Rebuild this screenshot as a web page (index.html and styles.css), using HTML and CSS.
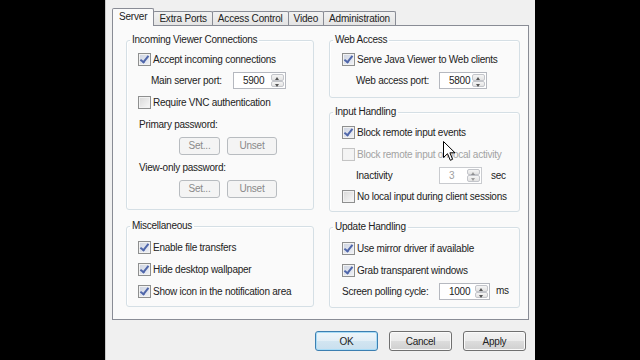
FILE: index.html
```html
<!DOCTYPE html>
<html>
<head>
  <meta charset="utf-8">
  <title>Server properties</title>
  <link rel="stylesheet" href="styles.css">
</head>
<body>
  <div class="dialog">

    <div class="tabs">
      <div class="tab active">Server</div>
      <div class="tab">Extra Ports</div>
      <div class="tab">Access Control</div>
      <div class="tab">Video</div>
      <div class="tab">Administration</div>
    </div>

    <div class="panel">
      <div class="col left">
        <fieldset class="group g-incoming">
          <legend>Incoming Viewer Connections</legend>
          <div class="row"><span class="box on"></span>Accept incoming connections</div>
          <div class="row field sub">
            <span class="lbl">Main server port:</span>
            <span class="spin spin-port"><span class="val">5900</span><span class="arrows"><i class="up"></i><i class="dn"></i></span></span>
          </div>
          <div class="row"><span class="box"></span>Require VNC authentication</div>
          <div class="row caption">Primary password:</div>
          <div class="row field btns">
            <span class="btn off b-set">Set...</span><span class="btn off b-unset">Unset</span>
          </div>
          <div class="row caption">View-only password:</div>
          <div class="row field btns">
            <span class="btn off b-set">Set...</span><span class="btn off b-unset">Unset</span>
          </div>
        </fieldset>

        <fieldset class="group g-misc">
          <legend>Miscellaneous</legend>
          <div class="row"><span class="box on"></span>Enable file transfers</div>
          <div class="row"><span class="box on"></span>Hide desktop wallpaper</div>
          <div class="row"><span class="box on"></span>Show icon in the notification area</div>
        </fieldset>
      </div>

      <div class="col right">
        <fieldset class="group g-web">
          <legend>Web Access</legend>
          <div class="row"><span class="box on"></span>Serve Java Viewer to Web clients</div>
          <div class="row field sub">
            <span class="lbl">Web access port:</span>
            <span class="spin spin-web"><span class="val">5800</span><span class="arrows"><i class="up"></i><i class="dn"></i></span></span>
          </div>
        </fieldset>

        <fieldset class="group g-input">
          <legend>Input Handling</legend>
          <div class="row"><span class="box on"></span>Block remote input events</div>
          <div class="row disabled"><span class="box"></span>Block remote input on local activity</div>
          <div class="row field sub inact">
            <span class="lbl">Inactivity</span>
            <span class="spin spin-inact off"><span class="val">3</span><span class="arrows"><i class="up"></i><i class="dn"></i></span></span>
            <span class="unit">sec</span>
          </div>
          <div class="row"><span class="box"></span>No local input during client sessions</div>
        </fieldset>

        <fieldset class="group g-update">
          <legend>Update Handling</legend>
          <div class="row"><span class="box on"></span>Use mirror driver if available</div>
          <div class="row"><span class="box on"></span>Grab transparent windows</div>
          <div class="row field poll">
            <span class="lbl">Screen polling cycle:</span>
            <span class="spin spin-poll"><span class="val">1000</span><span class="arrows"><i class="up"></i><i class="dn"></i></span></span>
            <span class="unit ms">ms</span>
          </div>
        </fieldset>
      </div>
    </div>

    <div class="footer">
      <span class="btn big default">OK</span>
      <span class="btn big">Cancel</span>
      <span class="btn big">Apply</span>
    </div>

    <svg class="cursor" width="13" height="21" viewBox="0 0 13 21">
      <path d="M0.5 0.5 L0.5 16.5 L4.5 12.7 L7.3 19.3 L9.6 18.3 L6.9 11.8 L12 11.8 Z" fill="#fff" stroke="#000" stroke-width="1" stroke-linejoin="miter"/>
    </svg>
  </div>
</body>
</html>
```

FILE: styles.css
```css
body {
  margin: 0;
  background: #000;
  font-family: "Liberation Sans", Arial, sans-serif;
  font-size: 10px;
  letter-spacing: -0.25px;
  color: #222;
}

.dialog {
  position: relative;
  box-sizing: border-box;
  width: 430px;
  height: 360px;
  margin: 0 auto;
  padding: 8px 0 0 6px;
  background: #f0f0f0;
  border-left: 1px solid #c9c9c9;
}

/* tab strip */

.tabs {
  display: flex;
  align-items: flex-end;
  height: 17px;
}

.tab {
  height: 14px;
  line-height: 14px;
  padding: 0 5px;
  margin-left: -1px;
  letter-spacing: -0.18px;
  border: 1px solid #898c95;
  border-bottom: none;
  border-radius: 2px 2px 0 0;
  background: linear-gradient(#f2f2f2, #e4e4e4);
  box-sizing: border-box;
}

.tab.active {
  position: relative;
  z-index: 1;
  height: 18px;
  line-height: 16px;
  margin: 0 0 -1px 0;
  padding: 0 6px;
  background: #fafafa;
}

.panel {
  display: flex;
  gap: 15px;
  box-sizing: border-box;
  width: 417px;
  height: 295px;
  padding: 8px 8px 0 13px;
  border: 1px solid #898c95;
  background: #fafafa;
}

.col {
  display: flex;
  flex-direction: column;
}

.left {
  width: 188px;
}

.right {
  width: 191px;
}

/* group boxes */

.group {
  margin: 0;
  padding: 2px 0 0 0;
  border: 1px solid #d5dfe5;
  border-radius: 3px;
  box-shadow: inset 1px 1px 0 #fff;
}

.group legend {
  height: 12px;
  line-height: 12px;
  margin-left: 3px;
  padding: 0 2px;
}

.g-incoming {
  padding-bottom: 10px;
}

.g-misc {
  margin-top: 10px;
  padding: 4px 0 4px 0;
}

.g-web {
  padding-bottom: 6px;
}

.g-input {
  margin-top: 8px;
  padding: 3px 0 4px 0;
}

.g-update {
  margin-top: 9px;
  padding: 4px 0 5px 0;
}

.row {
  display: flex;
  align-items: center;
  height: 22px;
  padding-left: 11px;
  white-space: nowrap;
}

.right .row {
  padding-left: 12px;
}

.row.field {
  height: 21px;
}

.row.caption {
  padding-left: 12px;
}

.left .row.sub {
  padding-left: 24px;
}

.right .row.sub {
  padding-left: 26px;
}

.g-input .row.inact {
  height: 20px;
}

.row.btns {
  padding-left: 52px;
  gap: 7px;
}

.row.disabled {
  color: #a2a2a2;
}

/* checkboxes */

.box {
  position: relative;
  flex: none;
  width: 13px;
  height: 13px;
  margin-right: 2px;
  box-sizing: border-box;
  border: 1px solid #8e8f8f;
  background: linear-gradient(135deg, #d8d8d8, #f9f9f9);
  box-shadow: inset 0 0 0 1px #f2f2f2;
}

.box.on {
  background: linear-gradient(135deg, #cdd3e0, #f0f2f7);
}

.box.on::after {
  content: "";
  position: absolute;
  left: 3px;
  top: 0px;
  width: 3px;
  height: 7px;
  border: solid #4f66aa;
  border-width: 0 2px 2px 0;
  transform: rotate(38deg);
}

.disabled .box {
  border-color: #c4c4c4;
  background: #f4f4f4;
}

/* spin boxes */

.lbl {
  flex: none;
}

.left .lbl {
  width: 82px;
}

.right .sub .lbl {
  width: 83px;
}

.poll .lbl {
  width: 97px;
}

.spin {
  display: flex;
  box-sizing: border-box;
  height: 17px;
  border: 1px solid #b5b8bf;
  background: #fff;
}

.spin .val {
  flex: 1;
  line-height: 15px;
  padding-left: 9px;
}

.spin-port {
  width: 53px;
}

.spin-web {
  width: 48px;
}

.spin-inact {
  width: 43px;
}

.spin-poll {
  width: 51px;
}

.arrows {
  display: flex;
  flex-direction: column;
  width: 13px;
  margin: 1px;
}

.arrows i {
  position: relative;
  flex: 1;
  border: 1px solid #c3c5ca;
  border-radius: 2px;
  background: linear-gradient(#f5f5f5, #e3e3e3);
}

.arrows i::after {
  content: "";
  position: absolute;
  left: 3px;
  top: 1px;
  border: 2.5px solid transparent;
}

.arrows .up::after {
  top: 0px;
  border-bottom: 3px solid #555;
}

.arrows .dn::after {
  top: 2px;
  border-top: 3px solid #555;
}

.spin.off {
  border-color: #c9cbcf;
  color: #a0a0a0;
}

.spin.off .arrows i::after {
  opacity: 0.5;
}

.unit {
  margin-left: 9px;
}

.unit.ms {
  margin-left: 6px;
  margin-top: -3px;
}

/* buttons */

.btn {
  display: inline-flex;
  align-items: center;
  justify-content: center;
  box-sizing: border-box;
  border: 1px solid #707070;
  border-radius: 3px;
  background: linear-gradient(#f2f2f2 0%, #ebebeb 50%, #dddddd 50%, #cfcfcf 100%);
  box-shadow: inset 0 0 0 1px #fafafa;
}

.btn.off {
  height: 18px;
  color: #8a8a8a;
  border-color: #b8bcc0;
  background: #f4f4f4;
  box-shadow: none;
}

.b-set {
  width: 41px;
}

.b-unset {
  width: 50px;
}

.footer {
  display: flex;
  justify-content: flex-end;
  gap: 11px;
  margin-top: 11px;
  padding-right: 9px;
}

.btn.big {
  width: 63px;
  height: 20px;
}

.btn.default {
  border-color: #3c7fb1;
  background: linear-gradient(#eef6fb 0%, #e2eef6 50%, #d2e5f1 50%, #c9dfee 100%);
  box-shadow: inset 0 0 0 1px #a8dcf7;
}

.cursor {
  position: absolute;
  left: 337px;
  top: 141px;
}
```
